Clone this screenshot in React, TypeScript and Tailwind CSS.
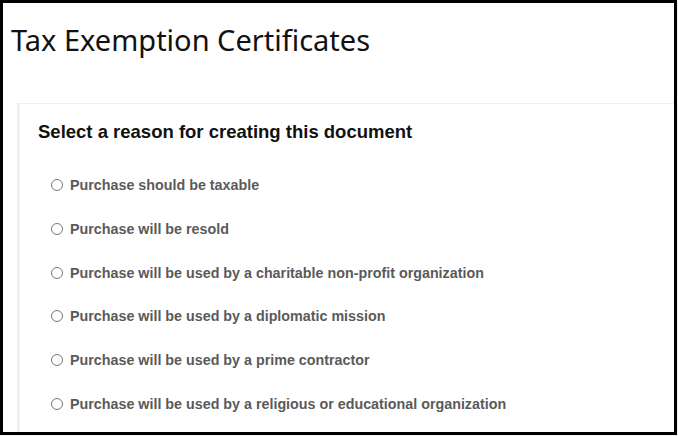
const REASONS = [
  'Purchase should be taxable',
  'Purchase will be resold',
  'Purchase will be used by a charitable non-profit organization',
  'Purchase will be used by a diplomatic mission',
  'Purchase will be used by a prime contractor',
  'Purchase will be used by a religious or educational organization',
];

export default function App() {
  return (
    <div className="w-[678px] h-[436px] bg-[#f4f4f4] overflow-hidden">
      <div className="w-[677px] h-[435px] border-[3px] border-black bg-white overflow-hidden flex flex-col">
        <h1 className="pl-[8px] pt-[18px] text-[29px] leading-[38px] text-[#111] font-['Noto_Sans',sans-serif]">
          Tax Exemption Certificates
        </h1>
        <div className="flex-1 ml-[14px] mt-[44px] border-l-[3px] border-t border-[#f0f0f0] pl-[18px] pt-[16px] font-['Liberation_Sans',Arial,sans-serif]">
          <h2 className="text-[18.5px] leading-[24px] font-bold text-[#111]">
            Select a reason for creating this document
          </h2>
          <div className="mt-[31px] flex flex-col gap-[23.8px] pl-[13px]">
            {REASONS.map((r) => (
              <label key={r} className="flex items-center gap-[7px] text-[14.3px] leading-[20px] font-bold text-[#5a5a5a]">
                <span className="w-[12px] h-[12px] rounded-full border border-[#777] bg-white shrink-0" />
                {r}
              </label>
            ))}
          </div>
        </div>
      </div>
    </div>
  );
}
